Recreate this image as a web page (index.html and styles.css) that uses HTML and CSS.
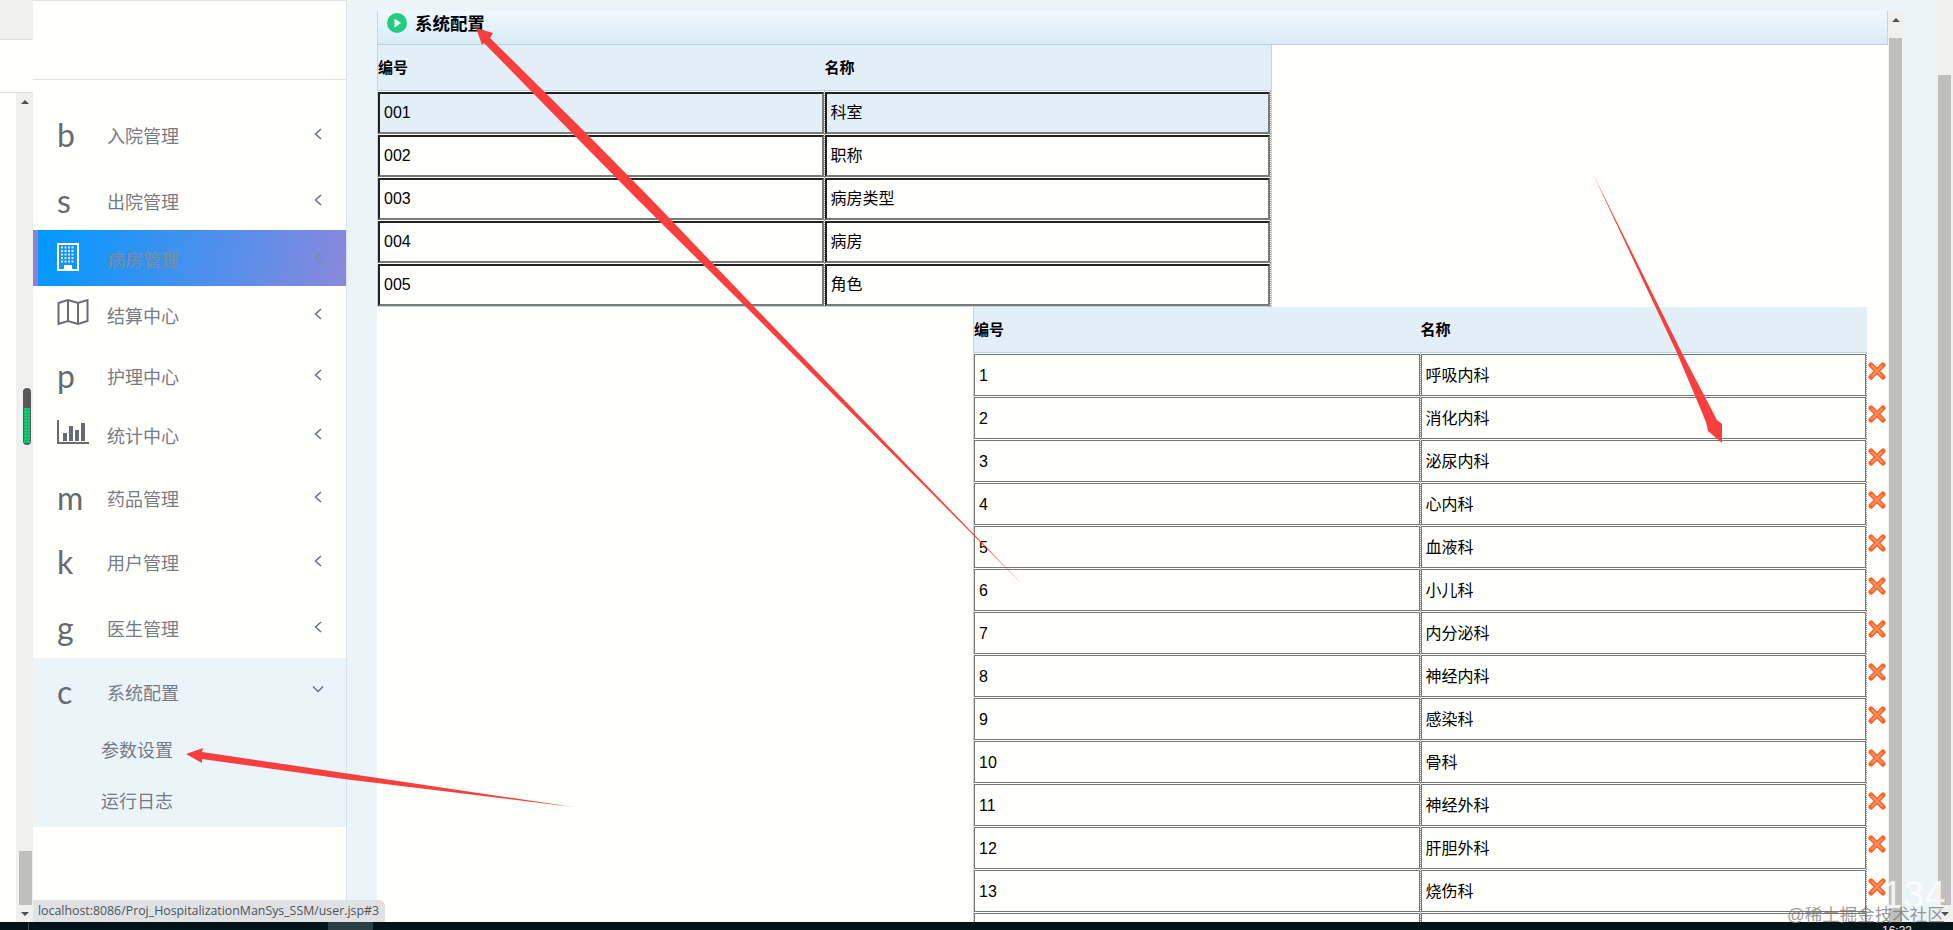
FILE: index.html
```html
<!DOCTYPE html>
<html lang="zh-CN">
<head>
<meta charset="utf-8">
<title>系统配置</title>
<link rel="stylesheet" href="styles.css">
</head>
<body>
<svg width="0" height="0" class="defs">
  <defs>
    <g id="cross">
      <path d="M3 3 L15 15 M15 3 L3 15" stroke="#fb6227" stroke-width="5" stroke-linecap="round"/>
      <path d="M4 4 L14 14 M14 4 L4 14" stroke="#ff8f5e" stroke-width="2" stroke-linecap="round"/>
    </g>
  </defs>
</svg>
<div class="desktop">
  <div class="outer-left">
    <div class="tab-band"></div>
    <div class="addr-band"></div>
    <div class="outer-left-body">
      <div class="blank"></div>
      <div class="scrollbar">
        <span class="arrow-up"></span>
        <span class="track"></span>
        <span class="thumb-small"></span>
        <span class="arrow-down"></span>
      </div>
    </div>
    <div class="pill"><span class="pill-level"></span></div>
  </div>

  <aside class="sidebar">
    <div class="logo-box"></div>
    <nav class="nav">
      <a class="nav-item h64 up1"><span class="ico">b</span><span class="label">入院管理</span><svg class="chev" viewBox="0 0 8 12"><path d="M7 1 L1.5 6 L7 11"/></svg></a>
      <a class="nav-item h62 dn1b"><span class="ico">s</span><span class="label">出院管理</span><svg class="chev" viewBox="0 0 8 12"><path d="M7 1 L1.5 6 L7 11"/></svg></a>
      <a class="nav-item h56 active dn1"><span class="ico"><svg class="building" viewBox="0 0 22 28"><rect width="22" height="28" fill="#fff"/><rect x="2" y="2" width="18" height="24" fill="#1592fb"/><path d="M4 4.5h14M4 8h14M4 11.500h14M4 15h14M4 18.500h14" stroke="#d6ecff" stroke-width="2" stroke-dasharray="2 1.500"/><rect x="7" y="22" width="8" height="6" fill="#fff"/></svg></span><span class="label">病房管理</span><svg class="chev" viewBox="0 0 8 12"><path d="M7 1 L1.500 6 L7 11"/></svg></a>
      <a class="nav-item h62 up2"><span class="ico"><svg class="map" viewBox="0 0 32 28"><path d="M1.500 5 L11 2 L21 5 L30.500 2 V23 L21 26 L11 23 L1.500 26 Z M11 2 V23 M21 5 V26"/></svg></span><span class="label">结算中心</span><svg class="chev" viewBox="0 0 8 12"><path d="M7 1 L1.500 6 L7 11"/></svg></a>
      <a class="nav-item h59 up1"><span class="ico">p</span><span class="label">护理中心</span><svg class="chev" viewBox="0 0 8 12"><path d="M7 1 L1.500 6 L7 11"/></svg></a>
      <a class="nav-item h61 up2"><span class="ico"><svg class="chart" viewBox="0 0 32 24"><path class="chart-axis" d="M1 0 V23 H32"/><rect x="6" y="13" width="4" height="8"/><rect x="12" y="6" width="4" height="15"/><rect x="18" y="10" width="4" height="11"/><rect x="24" y="3" width="4" height="18"/></svg></span><span class="label">统计中心</span><svg class="chev" viewBox="0 0 8 12"><path d="M7 1 L1.500 6 L7 11"/></svg></a>
      <a class="nav-item h64 up2"><span class="ico">m</span><span class="label">药品管理</span><svg class="chev" viewBox="0 0 8 12"><path d="M7 1 L1.500 6 L7 11"/></svg></a>
      <a class="nav-item h65 up2"><span class="ico">k</span><span class="label">用户管理</span><svg class="chev" viewBox="0 0 8 12"><path d="M7 1 L1.500 6 L7 11"/></svg></a>
      <a class="nav-item h61"><span class="ico">g</span><span class="label">医生管理</span><svg class="chev" viewBox="0 0 8 12"><path d="M7 1 L1.500 6 L7 11"/></svg></a>
      <div class="nav-group">
        <a class="nav-item h72 up2"><span class="ico">c</span><span class="label">系统配置</span><svg class="chev chev-down" viewBox="0 0 12 8"><path d="M1 1.500 L6 6.500 L11 1.500"/></svg></a>
        <a class="sub-item h38">参数设置</a>
        <a class="sub-item h59 sub-last">运行日志</a>
      </div>
    </nav>
    <div class="status">localhost:8086/Proj_HospitalizationManSys_SSM/user.jsp#3</div>
  </aside>

  <div class="gutter"></div>

  <div class="main-wrap">
    <div class="main-band"></div>
    <div class="main-row">
      <main class="main">
        <header class="panel-head">
          <svg class="play" viewBox="0 0 20 20"><circle cx="10" cy="10" r="10" fill="#22cc80"/><path d="M7.500 5.500 L14 10 L7.500 14.500 Z" fill="#fffffb"/></svg>
          <h1 class="panel-title">系统配置</h1>
        </header>
        <table class="grid">
          <thead><tr><th>编号</th><th>名称</th></tr></thead>
          <tbody class="strong">
            <tr class="selected"><td><div class="box">001</div></td><td><div class="box">科室</div></td></tr>
            <tr><td><div class="box">002</div></td><td><div class="box">职称</div></td></tr>
            <tr><td><div class="box">003</div></td><td><div class="box">病房类型</div></td></tr>
            <tr><td><div class="box">004</div></td><td><div class="box">病房</div></td></tr>
            <tr><td><div class="box">005</div></td><td><div class="box">角色</div></td></tr>
          </tbody>
        </table>
        <table class="grid grid-sub">
          <thead><tr><th>编号</th><th>名称</th><th class="act"></th></tr></thead>
          <tbody>
            <tr><td><div class="box">1</div></td><td><div class="box">呼吸内科</div></td><td class="act"><svg class="x" viewBox="0 0 18 18"><use href="#cross"/></svg></td></tr>
            <tr><td><div class="box">2</div></td><td><div class="box">消化内科</div></td><td class="act"><svg class="x" viewBox="0 0 18 18"><use href="#cross"/></svg></td></tr>
            <tr><td><div class="box">3</div></td><td><div class="box">泌尿内科</div></td><td class="act"><svg class="x" viewBox="0 0 18 18"><use href="#cross"/></svg></td></tr>
            <tr><td><div class="box">4</div></td><td><div class="box">心内科</div></td><td class="act"><svg class="x" viewBox="0 0 18 18"><use href="#cross"/></svg></td></tr>
            <tr><td><div class="box">5</div></td><td><div class="box">血液科</div></td><td class="act"><svg class="x" viewBox="0 0 18 18"><use href="#cross"/></svg></td></tr>
            <tr><td><div class="box">6</div></td><td><div class="box">小儿科</div></td><td class="act"><svg class="x" viewBox="0 0 18 18"><use href="#cross"/></svg></td></tr>
            <tr><td><div class="box">7</div></td><td><div class="box">内分泌科</div></td><td class="act"><svg class="x" viewBox="0 0 18 18"><use href="#cross"/></svg></td></tr>
            <tr><td><div class="box">8</div></td><td><div class="box">神经内科</div></td><td class="act"><svg class="x" viewBox="0 0 18 18"><use href="#cross"/></svg></td></tr>
            <tr><td><div class="box">9</div></td><td><div class="box">感染科</div></td><td class="act"><svg class="x" viewBox="0 0 18 18"><use href="#cross"/></svg></td></tr>
            <tr><td><div class="box">10</div></td><td><div class="box">骨科</div></td><td class="act"><svg class="x" viewBox="0 0 18 18"><use href="#cross"/></svg></td></tr>
            <tr><td><div class="box">11</div></td><td><div class="box">神经外科</div></td><td class="act"><svg class="x" viewBox="0 0 18 18"><use href="#cross"/></svg></td></tr>
            <tr><td><div class="box">12</div></td><td><div class="box">肝胆外科</div></td><td class="act"><svg class="x" viewBox="0 0 18 18"><use href="#cross"/></svg></td></tr>
            <tr><td><div class="box">13</div></td><td><div class="box">烧伤科</div></td><td class="act"><svg class="x" viewBox="0 0 18 18"><use href="#cross"/></svg></td></tr>
            <tr><td><div class="box"></div></td><td><div class="box"></div></td><td class="act"></td></tr>
          </tbody>
        </table>
      </main>
      <div class="scrollbar main-scroll">
        <span class="arrow-up"></span>
        <span class="thumb-fill"></span>
      </div>
    </div>
  </div>

  <div class="gutter-right"></div>
  <div class="scrollbar outer-scroll">
    <span class="track-top"></span>
    <span class="thumb-fill"></span>
    <span class="arrow-down"></span>
  </div>
</div>
<footer class="taskbar">
  <span class="task-line"></span>
  <span class="task-app"></span>
  <span class="clock">16:33</span>
</footer>

<svg class="annot" viewBox="0 0 1953 930" width="1953" height="930">
  <polygon points="476,28 493,33 490,38 586,133 652,200 763,316 1022,584 755,316 638,200 572,133 484,43 482,45"/>
  <polygon points="1593,174 1682,353 1717,420 1722,424 1722,443 1708,431 1706,422 1677,353"/>
  <polygon points="186,754 203,748 202,752 344,773 573,807 344,779 202,759 202,763"/>
</svg>
<div class="wm-big">134</div>
<div class="wm-small">@稀土掘金技术社区</div>
</body>
</html>
```
FILE: styles.css
```css
* { box-sizing: border-box; }
html, body { margin: 0; padding: 0; }
body {
  width: 1953px;
  height: 930px;
  overflow: hidden;
  position: relative;
  display: flex;
  flex-direction: column;
  background: #fffffb;
  color: #000;
  font-family: "Liberation Sans", "Noto Sans CJK SC", sans-serif;
}
.defs { position: absolute; }
.desktop { display: flex; height: 922px; overflow: hidden; }

/* outer left strip */
.outer-left { position: relative; width: 33px; display: flex; flex-direction: column; flex: none; }
.tab-band { height: 40px; background: #f0f0ef; border-bottom: 1px solid #dedede; }
.addr-band { height: 53px; border-bottom: 1px solid #dedede; }
.outer-left-body { flex: 1; display: flex; min-height: 0; }
.blank { width: 16px; }
.scrollbar { display: flex; flex-direction: column; align-items: center; background: #f0f0ef; flex: none; }
.outer-left-body .scrollbar { width: 17px; padding: 0 0 0 1px; }
.arrow-up, .arrow-down { display: block; width: 0; height: 0; border-left: 4px solid transparent; border-right: 4px solid transparent; flex: none; }
.arrow-up { border-bottom: 4px solid #505050; margin-top: 7px; }
.arrow-down { border-top: 4px solid #505050; margin: 7px 0 6px; }
.track { flex: 1; }
.thumb-small { display: block; width: 13px; height: 54px; background: #bfbfbd; flex: none; }
.pill {
  position: absolute; left: 23px; top: 388px; width: 8px; height: 57px;
  border-radius: 4px; background: #5a5a5a; overflow: hidden;
  display: flex; flex-direction: column; justify-content: flex-end;
}
.pill-level {
  display: block; height: 35px; margin: 0 1px 2px;
  background: repeating-linear-gradient(#00d070 0 2px, #30a070 2px 3px);
}

/* sidebar */
.sidebar {
  position: relative; width: 314px; flex: none;
  background: #fffffb;
  border-top: 1px solid #e4e4e2;
  border-right: 1px solid #d8e2ea;
  display: flex; flex-direction: column;
}
.logo-box { height: 79px; border-bottom: 1px solid #e4e4e2; flex: none; }
.nav { padding-top: 24px; display: flex; flex-direction: column; }
.nav-item {
  display: flex; align-items: center;
  padding: 0 24px 0 24px;
  color: #777b85;
  font-size: 18px;
}
.ico {
  width: 50px; flex: none;
  font-family: "Lato", sans-serif;
  font-size: 32px; line-height: 1;
  color: #686a72;
  display: flex; align-items: center;
}
.label { flex: 1; }
.chev { width: 8px; height: 12px; fill: none; stroke: #5f6e85; stroke-width: 1.4; transform: translateY(-1px); flex: none; }
.chev-down { width: 12px; height: 8px; margin-right: -2px; transform: translateY(-3px); }
.h38 { height: 38px; }
.h56 { height: 56px; }
.h59 { height: 59px; }
.h61 { height: 61px; }
.h62 { height: 62px; }
.h64 { height: 64px; }
.h65 { height: 65px; }
.h72 { height: 72px; }
.up1 { padding-bottom: 3px; }
.up2 { padding-bottom: 5px; }
.dn1 { padding-top: 2px; }
.dn1b { padding-top: 3px; }
.active {
  background: linear-gradient(100deg, #0099ff 0%, #8a88dc 100%);
  border-left: 5px solid #8a82d4;
  padding-left: 19px;
  color: #7f8a9a;
}
.active .chev { stroke: #7f8a9e; }
.building { width: 22px; height: 28px; display: block; margin-top: -4px; }
.map { width: 32px; height: 28px; display: block; fill: none; stroke: #6a6c78; stroke-width: 2; margin-top: -6px; }
.chart { width: 32px; height: 24px; display: block; fill: #686a72; margin-top: -6px; }
.chart-axis { fill: none; stroke: #686a72; stroke-width: 2; }
.nav-group { background: #eaf4f9; }
.sub-item { display: flex; align-items: center; padding-left: 68px; color: #777b85; font-size: 18px; }
.sub-last { padding-top: 4px; }
.status {
  position: absolute; left: 0; bottom: 0;
  height: 22px; padding: 0 6px 0 5px;
  background: #dfe1e5;
  border-radius: 0 6px 0 0;
  color: #50525a;
  font-family: "Open Sans", sans-serif;
  font-size: 12.350px; line-height: 22px;
  white-space: nowrap;
  z-index: 2;
}
.gutter { width: 30px; flex: none; background: #eaf4f9; }

/* main */
.main-wrap { width: 1526px; flex: none; display: flex; flex-direction: column; }
.main-band { height: 11px; background: #eaf4f9; flex: none; }
.main-row { flex: 1; display: flex; min-height: 0; }
.main { width: 1511px; overflow: hidden; background: #fffffb; flex: none; }
.panel-head {
  height: 34px;
  display: flex; align-items: flex-start;
  padding: 2px 0 0 9px;
  background: linear-gradient(#eff8fd, #d9ebf5);
  border-left: 1px solid #c0d8e6;
  border-right: 1px solid #c0d8e6;
  border-bottom: 1px solid #b8d4e4;
}
.play { width: 20px; height: 20px; flex: none; margin-right: 8px; }
.panel-title { margin: 2px 0 0; font-size: 17.500px; font-weight: 700; line-height: 18px; }

.grid {
  width: 895px;
  table-layout: fixed;
  border-collapse: separate;
  border-spacing: 0;
  border-left: 1px solid #c0d8e6;
  border-bottom: 1px solid #c0d8e6;
  border-right: 1px solid #c0d8e6;
}
.grid th {
  height: 46px;
  padding: 0 0 3px;
  text-align: left;
  font-size: 15px;
  font-weight: 700;
  background: #e3eff7;
  border-bottom: 1px solid #b8d4e4;
}
.grid td { padding: 1px 0 0; border-right: 1px dotted #999; vertical-align: top; }
.box {
  height: 42px;
  padding-left: 4px;
  font-size: 16px;
  line-height: 41px;
  border: 1px solid #777;
  overflow: hidden;
}
.strong .box { border: 2px solid #7a7a78; border-top-color: #222; border-left-color: #222; line-height: 37px; }
.selected .box { background: #e3eff7; }
.grid-sub {
  width: 915px;
  margin-left: 596px;
  margin-top: 0;
  border-bottom: 0; border-right: 0;
}
.grid-sub th.act { width: 21px; background: transparent; border-bottom: 0; }
.grid-sub td.act { width: 21px; border-right: 0; padding: 9px 0 0 1px; }
.x { width: 18px; height: 18px; display: block; }
.main-scroll { width: 15px; }
.main-scroll .thumb-fill { margin-top: 16px; }
.thumb-fill { display: block; width: 13px; flex: 1; background: #bfbfbd; }

.gutter-right { width: 33px; flex: none; background: #eaf4f9; }
.outer-scroll { width: 17px; }
.track-top { display: block; height: 75px; flex: none; }

/* taskbar */
.taskbar { position: relative; height: 8px; flex: none; background: #021418; overflow: hidden; display: flex; }
.task-line { width: 1px; height: 8px; margin-left: 28px; background: #3c4c50; flex: none; }
.task-app { width: 45px; height: 8px; margin-left: 299px; background: #2a3f42; flex: none; }
.clock { margin-left: auto; margin-right: 41px; color: #e8eef0; font-size: 12px; line-height: 12px; padding-top: 3px; height: 15px; }

/* annotations */
.annot { position: absolute; left: 0; top: 0; fill: #f93e3e; pointer-events: none; z-index: 5; }
.wm-big {
  position: absolute; left: 1882px; top: 873px; z-index: 6;
  font-size: 38px; line-height: 44px; font-family: "Liberation Sans", sans-serif;
  color: rgba(255, 255, 255, .82);
}
.wm-small {
  position: absolute; left: 1787px; top: 905px; z-index: 6;
  font-size: 17.500px; line-height: 20px; white-space: nowrap;
  color: rgba(120, 120, 120, .75);
}
```
